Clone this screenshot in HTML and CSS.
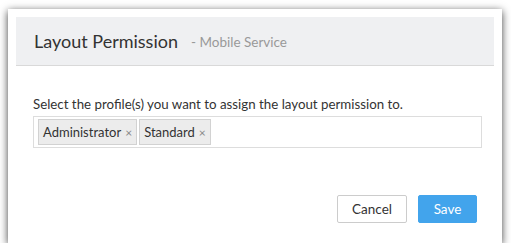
FILE: index.html
```html
<!DOCTYPE html>
<html lang="en">
<head>
    <meta charset="UTF-8">
    <title>Layout Permission</title>
    <link rel="stylesheet" href="styles.css">
</head>
<body>
    <div class="dialog">
        <div class="dialog-header">
            <span class="title">Layout Permission</span>
            <span class="subtitle">- Mobile Service</span>
        </div>
        <div class="dialog-body">
            <label class="field-label">Select the profile(s) you want to assign the layout permission to.</label>
            <div class="tag-input">
                <span class="tag">Administrator <span class="tag-close">&times;</span></span>
                <span class="tag">Standard <span class="tag-close">&times;</span></span>
            </div>
        </div>
        <div class="dialog-footer">
            <button class="btn btn-cancel">Cancel</button>
            <button class="btn btn-save">Save</button>
        </div>
    </div>
</body>
</html>
```
FILE: styles.css
```css
body {
    font-family: 'Lato', sans-serif;
    background-color: #ffffff;
    color: #333333;
    margin: 0;
}
.dialog {
    box-sizing: border-box;
    width: 494px;
    height: 234px;
    margin: 9px 0 0 8px;
    padding: 8px;
    background-color: #ffffff;
    box-shadow: 0 2px 8px rgba(0,0,0,0.75);
    display: flex;
    flex-direction: column;
}
.dialog-header {
    box-sizing: border-box;
    height: 49px;
    padding-left: 18px;
    background-color: #eff0f2;
    border-bottom: 1px solid #d9d9d9;
    display: flex;
    align-items: center;
}
.title {
    font-size: 18px;
    color: #333333;
}
.subtitle {
    font-size: 13.5px;
    color: #999999;
    margin-left: 13px;
    padding-top: 2px;
}
.dialog-body {
    padding: 30px 0 0 17px;
}
.field-label {
    display: block;
    font-size: 13.3px;
    line-height: 16px;
    margin-bottom: 4px;
}
.tag-input {
    box-sizing: border-box;
    width: 449px;
    height: 32px;
    padding: 2px 4px;
    border: 1px solid #dddddd;
    display: flex;
    gap: 2px;
}
.tag {
    box-sizing: border-box;
    height: 26px;
    padding: 0 4px;
    background-color: #ececec;
    border: 1px solid #d2d2d2;
    font-size: 13px;
    display: flex;
    align-items: center;
    gap: 4px;
}
.tag-close {
    color: #888888;
    font-size: 12px;
}
.dialog-footer {
    margin-top: auto;
    padding: 0 17px 12px 0;
    display: flex;
    justify-content: flex-end;
    gap: 11px;
}
.btn {
    height: 28px;
    border-radius: 2px;
    font-family: 'Lato', sans-serif;
    font-size: 13.5px;
    cursor: pointer;
}
.btn-cancel {
    width: 70px;
    background-color: #ffffff;
    border: 1px solid #cccccc;
    color: #333333;
}
.btn-save {
    width: 59px;
    background-color: #42a4ec;
    border: 1px solid #42a4ec;
    color: #ffffff;
}
```
